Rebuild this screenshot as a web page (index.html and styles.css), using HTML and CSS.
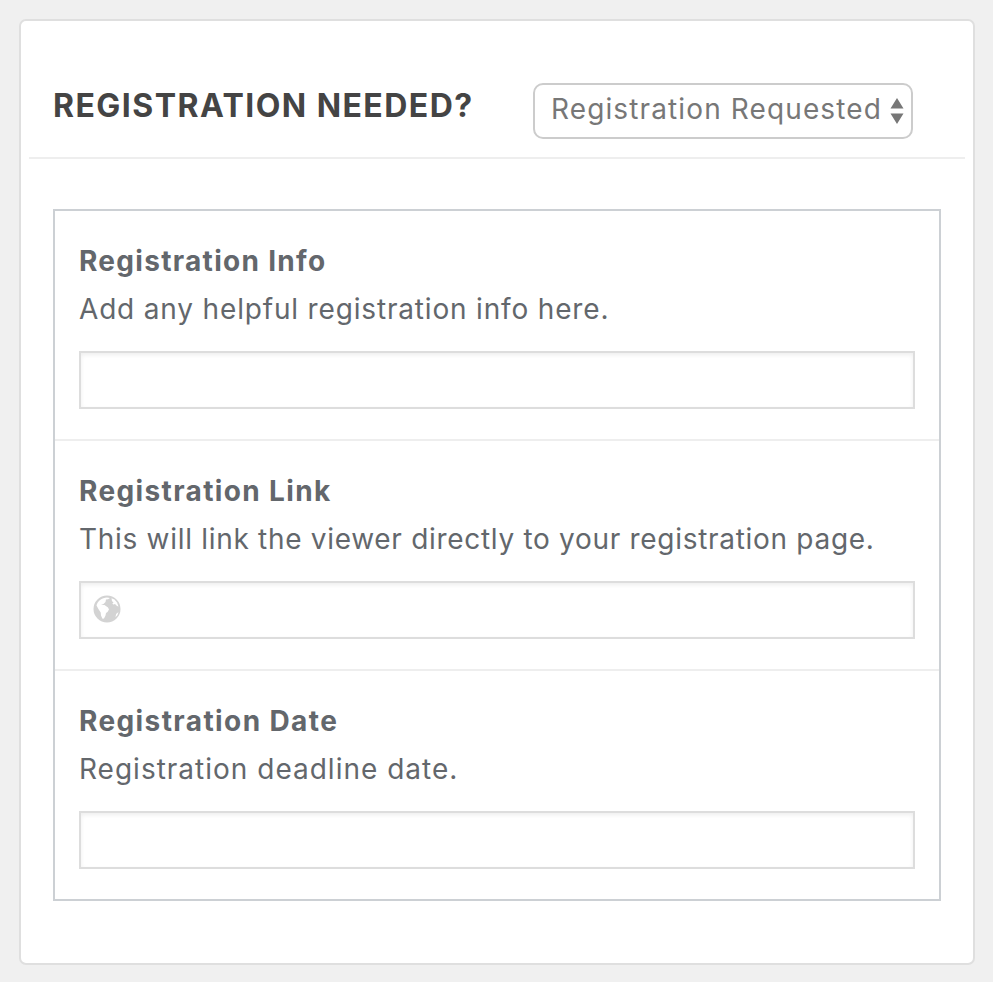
FILE: index.html
```
<!DOCTYPE html>
<html lang="en">
<head>
<meta charset="utf-8">
<title>Registration</title>
<link rel="stylesheet" href="styles.css">
</head>
<body>
<main class="card">
  <header class="card-header">
    <h1 class="title">REGISTRATION NEEDED?</h1>
    <div class="select">
      <span class="select-value">Registration Requested</span>
      <svg class="select-arrows" width="14" height="26" viewBox="0 0 14 26"><path d="M7 0l6.500 10.500H.5zM7 26L.5 15.500h13z" fill="#777"/></svg>
    </div>
  </header>
  <section class="fields">
    <div class="field">
      <h2 class="label label-info">Registration Info</h2>
      <p class="help help-info">Add any helpful registration info here.</p>
      <div class="input"></div>
    </div>
    <div class="field">
      <h2 class="label label-link">Registration Link</h2>
      <p class="help help-link">This will link the viewer directly to your registration page.</p>
      <div class="input">
        <svg class="globe" width="28" height="28" viewBox="0 0 28 28"><circle cx="14" cy="14" r="12.700" fill="#d3d3d3" stroke="#d3d3d3" stroke-width="1.600"/><path fill="#fff" d="M7 5C9 3.300 11.500 2.500 14 2.400L17 3l-2 1.200-2 .3-.5 2.500-2 2-2.500 1 3.500 0 3.500 2.500 1 2-1.500 2.500-1.500 1-.5 2.500-1.500 3-1.500.3-1.500-3.300-.3-3-2-3L3.500 10.500C4 8.500 5.200 6.500 7 5zM18.500 3.200l3 1.300 2.500 3 1.500 4-1.500-.5-2-2-1.500.5-1.200-.8 1.200-1.500-1.500-1zM25.500 17l-1 3-2 2.300.6-3.300z"/></svg>
      </div>
    </div>
    <div class="field">
      <h2 class="label label-date">Registration Date</h2>
      <p class="help help-date">Registration deadline date.</p>
      <div class="input"></div>
    </div>
  </section>
</main>
</body>
</html>
```
FILE: styles.css
```
* { box-sizing: border-box; }
body {
  margin: 0;
  padding: 19px 18px 17px 19px;
  background: #f0f0f0;
  color: #63676c;
  font-family: Inter, "Open Sans", sans-serif;
  font-size: 28px;
}
.card {
  height: 946px;
  padding: 0 8px;
  background: #fff;
  border: 2px solid #dfdfdf;
  border-radius: 7px;
}
.card-header {
  display: flex;
  justify-content: space-between;
  height: 138px;
  padding: 62px 52px 0 24px;
  border-bottom: 2px solid #eee;
}
.title {
  margin: 3px 0 0;
  color: #444;
  font-size: 32px;
  font-weight: 700;
  line-height: 40px;
  letter-spacing: 1.45px;
  white-space: nowrap;
}
.select {
  display: flex;
  align-items: flex-start;
  justify-content: space-between;
  width: 380px;
  height: 56px;
  padding: 6px 7px 0 16px;
  border: 2px solid #ccc;
  border-radius: 10px;
  color: #777;
  line-height: 36px;
  white-space: nowrap;
}
.select-value { letter-spacing: 1.12px; }
.select-arrows { margin-top: 7px; }
.fields {
  margin: 50px 24px 0;
  border: 2px solid #ccd0d4;
}
.field {
  height: 230px;
  padding: 32px 24px 0;
  border-bottom: 2px solid #eee;
}
.field:last-child { height: 228px; border-bottom: 0; }
.label {
  margin: 0;
  font-size: 28px;
  font-weight: 700;
  line-height: 36px;
}
.label-info { letter-spacing: 1.3px; }
.label-link { letter-spacing: 1.37px; }
.label-date { letter-spacing: 1.4px; }
.help {
  margin: 12px 0 24px;
  line-height: 36px;
  white-space: nowrap;
}
.help-info { letter-spacing: 0.83px; }
.help-link { letter-spacing: 0.7px; }
.help-date { letter-spacing: 1px; }
.input {
  height: 58px;
  padding: 12px;
  border: 2px solid #ddd;
  box-shadow: inset 0 2px 4px rgba(0, 0, 0, 0.07);
}
.globe { display: block; }
```
